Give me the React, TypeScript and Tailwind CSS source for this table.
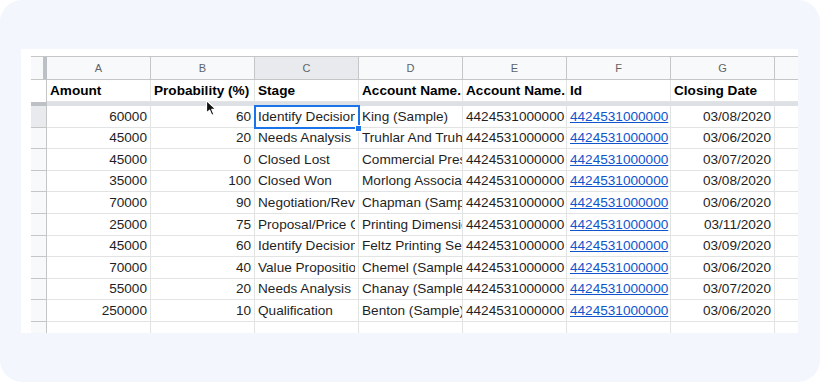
import React from "react";

type Row = {
  amount: string;
  prob: string;
  stage: string;
  account: string;
  date: string;
};

const rows: Row[] = [
  { amount: "60000", prob: "60", stage: "Identify Decision Makers", account: "King (Sample)", date: "03/08/2020" },
  { amount: "45000", prob: "20", stage: "Needs Analysis", account: "Truhlar And Truhlar (Sample)", date: "03/06/2020" },
  { amount: "45000", prob: "0", stage: "Closed Lost", account: "Commercial Press (Sample)", date: "03/07/2020" },
  { amount: "35000", prob: "100", stage: "Closed Won", account: "Morlong Associates (Sample)", date: "03/08/2020" },
  { amount: "70000", prob: "90", stage: "Negotiation/Review", account: "Chapman (Sample)", date: "03/06/2020" },
  { amount: "25000", prob: "75", stage: "Proposal/Price Quote", account: "Printing Dimensions (Sample)", date: "03/11/2020" },
  { amount: "45000", prob: "60", stage: "Identify Decision Makers", account: "Feltz Printing Service (Sample)", date: "03/09/2020" },
  { amount: "70000", prob: "40", stage: "Value Proposition", account: "Chemel (Sample)", date: "03/06/2020" },
  { amount: "55000", prob: "20", stage: "Needs Analysis", account: "Chanay (Sample)", date: "03/07/2020" },
  { amount: "250000", prob: "10", stage: "Qualification", account: "Benton (Sample)", date: "03/06/2020" },
];

const letters = ["A", "B", "C", "D", "E", "F", "G", ""];

const Cell = ({
  children,
  right,
  className = "",
}: {
  children?: React.ReactNode;
  right?: boolean;
  className?: string;
}) => (
  <div
    className={`w-[104px] shrink-0 h-full border-r border-b border-[#e2e3e3] px-[3px] pt-[1px] flex items-center overflow-hidden whitespace-nowrap ${
      right ? "justify-end" : "justify-start"
    } ${className}`}
  >
    {children}
  </div>
);

// mouse pointer over the header row
const Cursor = () => (
  <svg
    className="absolute left-[184px] top-[50px] z-20"
    width="13"
    height="18"
    viewBox="0 0 13 18"
  >
    <path
      d="M1.5 1.5 L1.5 14 L4.6 11.2 L6.8 16.2 L8.9 15.3 L6.8 10.4 L10.9 10.4 Z"
      fill="#111"
      stroke="#fff"
      strokeWidth="1.2"
      strokeLinejoin="round"
    />
  </svg>
);

export default function App() {
  return (
    <div className="w-[820px] h-[382px] bg-white overflow-hidden">
      <div
        className="w-full h-full rounded-[22px] bg-[#f3f6fd] pt-[49px] pl-[21px]"
        style={{ fontFamily: '"Liberation Sans", Arial, sans-serif' }}
      >
        <div className="relative w-[777px] h-[284px] bg-white pt-[7px] pl-[10px] overflow-hidden text-[13.6px] text-[#1f1f1f]">
          {/* column letters */}
          <div className="flex h-[24px] border-t border-[#c4c7c5] bg-[#f8f9fa]">
            <div className="w-[16px] shrink-0 h-full flex border-b border-[#c4c7c5]">
              <div className="flex-1" />
              <div className="w-[4px] bg-[#bdc1c6]" />
            </div>
            {letters.map((l, i) => (
              <div
                key={i}
                className={`w-[104px] shrink-0 h-full border-r border-b border-[#c4c7c5] flex items-center justify-center text-[11px] text-[#5f6368] ${
                  l === "C" ? "bg-[#e8eaed]" : ""
                }`}
              >
                {l}
              </div>
            ))}
          </div>

          {/* header row */}
          <div className="flex h-[22px] font-bold text-black">
            <div className="w-[16px] shrink-0 h-full border-r border-[#c4c7c5] bg-white" />
            <Cell>Amount</Cell>
            <Cell>Probability (%)</Cell>
            <Cell>Stage</Cell>
            <Cell>Account Name.</Cell>
            <Cell>Account Name.</Cell>
            <Cell>Id</Cell>
            <Cell>Closing Date</Cell>
            <Cell />
          </div>

          {/* freeze bar */}
          <div className="flex h-[4px]">
            <div className="w-[16px] shrink-0 bg-[#bdc1c6]" />
            <div className="flex-1 bg-[#dde1e6]" />
          </div>

          {rows.map((r, i) => (
            <div key={i} className="flex h-[21.6px]">
              <div
                className={`w-[16px] shrink-0 h-full border-r border-b border-[#c4c7c5] ${
                  i === 0 ? "bg-[#e8eaed]" : "bg-[#f8f9fa]"
                }`}
              />
              <Cell right>{r.amount}</Cell>
              <Cell right>{r.prob}</Cell>
              <Cell
                className={
                  i === 0 ? "relative overflow-visible outline-2 outline-[#1a73e8] -outline-offset-1 z-10" : ""
                }
              >
                <span className="block overflow-hidden w-full">{r.stage}</span>
                {i === 0 && (
                  <span className="absolute right-[-4px] bottom-[-5px] w-[7px] h-[7px] bg-[#1a73e8] border border-white" />
                )}
              </Cell>
              <Cell>{r.account}</Cell>
              <Cell>4424531000000</Cell>
              <Cell>
                <span className="text-[#1155cc] underline">4424531000000</span>
              </Cell>
              <Cell right>{r.date}</Cell>
              <Cell />
            </div>
          ))}

          {/* empty row */}
          <div className="flex h-[21.6px]">
            <div className="w-[16px] shrink-0 h-full border-r border-[#c4c7c5] bg-[#f8f9fa]" />
            {letters.map((_, i) => (
              <Cell key={i} />
            ))}
          </div>

          <Cursor />
        </div>
      </div>
    </div>
  );
}
